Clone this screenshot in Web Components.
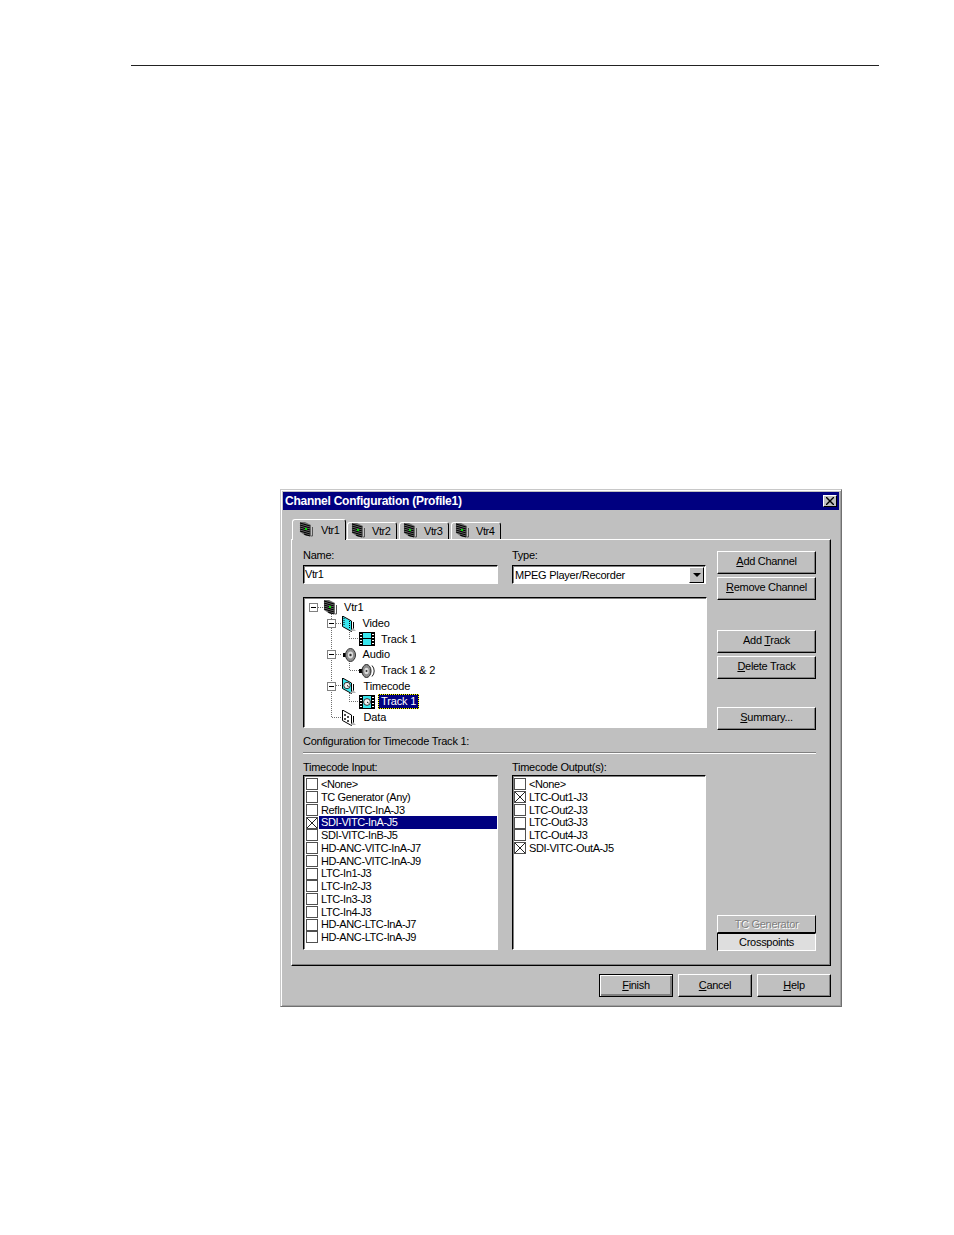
<!DOCTYPE html>
<html>
<head>
<meta charset="utf-8">
<title>Channel Configuration</title>
<style>
  html, body { margin: 0; background: #fff; }
  body { font-family: "Liberation Sans", Arial, sans-serif; }
</style>
</head>
<body>
<manual-page>
  <config-dialog heading="Channel Configuration (Profile1)">
    <tab-strip slot="tabs">
      <tab-item active>Vtr1</tab-item>
      <tab-item>Vtr2</tab-item>
      <tab-item>Vtr3</tab-item>
      <tab-item>Vtr4</tab-item>
    </tab-strip>

    <channel-panel slot="panel">
      <labeled-field slot="name" label="Name:" lift><text-box>Vtr1</text-box></labeled-field>
      <labeled-field slot="type" label="Type:" lift><combo-box>MPEG Player/Recorder</combo-box></labeled-field>

      <track-tree slot="tree">
        <tree-row depth="0" expander icon="vtr">Vtr1</tree-row>
        <tree-row depth="1" expander icon="video" gap="6">Video</tree-row>
        <tree-row depth="2" icon="film" gap="6">Track 1</tree-row>
        <tree-row depth="1" expander icon="speaker" gap="6">Audio</tree-row>
        <tree-row depth="2" icon="speaker2" gap="6">Track 1 &amp; 2</tree-row>
        <tree-row depth="1" expander icon="clock" gap="7">Timecode</tree-row>
        <tree-row depth="2" icon="filmclock" gap="6" selected>Track 1</tree-row>
        <tree-row depth="1" icon="data" gap="7">Data</tree-row>
      </track-tree>

      <win-button slot="actions"><u>A</u>dd Channel</win-button>
      <win-button slot="actions" style="margin-top:3.5px"><u>R</u>emove Channel</win-button>
      <win-button slot="actions" style="margin-top:30.5px">Add <u>T</u>rack</win-button>
      <win-button slot="actions" style="margin-top:3.5px"><u>D</u>elete Track</win-button>
      <win-button slot="actions" style="margin-top:28.5px"><u>S</u>ummary...</win-button>

      <span slot="caption">Configuration for Timecode Track 1:</span>

      <labeled-field slot="input" label="Timecode Input:">
        <check-list>
          <check-item>&lt;None&gt;</check-item>
          <check-item>TC Generator (Any)</check-item>
          <check-item>RefIn-VITC-InA-J3</check-item>
          <check-item checked selected>SDI-VITC-InA-J5</check-item>
          <check-item>SDI-VITC-InB-J5</check-item>
          <check-item>HD-ANC-VITC-InA-J7</check-item>
          <check-item>HD-ANC-VITC-InA-J9</check-item>
          <check-item>LTC-In1-J3</check-item>
          <check-item>LTC-In2-J3</check-item>
          <check-item>LTC-In3-J3</check-item>
          <check-item>LTC-In4-J3</check-item>
          <check-item>HD-ANC-LTC-InA-J7</check-item>
          <check-item>HD-ANC-LTC-InA-J9</check-item>
        </check-list>
      </labeled-field>

      <labeled-field slot="output" label="Timecode Output(s):">
        <check-list style="--inset:1px">
          <check-item>&lt;None&gt;</check-item>
          <check-item checked>LTC-Out1-J3</check-item>
          <check-item>LTC-Out2-J3</check-item>
          <check-item>LTC-Out3-J3</check-item>
          <check-item>LTC-Out4-J3</check-item>
          <check-item checked>SDI-VITC-OutA-J5</check-item>
        </check-list>
      </labeled-field>

      <win-button slot="mode" flat disabled>TC Generator</win-button>
      <win-button slot="mode" flat pressed>Crosspoints</win-button>
    </channel-panel>

    <win-button slot="footer" wide default><u>F</u>inish</win-button>
    <win-button slot="footer" wide><u>C</u>ancel</win-button>
    <win-button slot="footer" wide><u>H</u>elp</win-button>
  </config-dialog>
</manual-page>

<script>
// small helper, every element just sets its shadow html once
class Base extends HTMLElement {
  constructor() {
    super();
    this.shadowDOM = this.attachShadow({ mode: "open" });
  }
  connectedCallback() {
    this.render();
  }
}

const CYAN = "#38e6ee";
const SLANT_EDGE = `<path d="M12.5 6v8" stroke="#000"/><polygon points="9,15 15,15 12,12" fill="#b4b4b4"/>`;

const ICONS = {
  vtr: `<polygon points="1,0 6,0 12,3 12,14 7,14 1,10" fill="#6e6e6e"/>
    <path d="M1 1L11 4M1 3L11 6M1 5L11 8M1 7L11 10M1 9L11 12M5 12L11 14" stroke="#000" stroke-width="1.2"/>
    <rect x="6" y="6" width="2" height="2" fill="#00e000"/>
    <path d="M13.5 5v9h-2" fill="none" stroke="#555"/>`,
  video: `<polygon points="1,0 10,5 10,15 1,10" fill="${CYAN}"/>
    <path d="M1.5 0v10.5l9 5V5z" fill="none" stroke="#000"/>
    <path d="M3 2v8M8.5 5v8" stroke="#000" stroke-dasharray="1 1"/>${SLANT_EDGE}`,
  film: `<rect x="0" y="1" width="16" height="14" fill="#000"/>
    <rect x="4" y="2" width="8" height="5" fill="${CYAN}"/><rect x="4" y="8" width="8" height="6" fill="${CYAN}"/>
    <path d="M1 3.5h2M1 6.5h2M1 9.5h2M1 12.5h2M13 3.5h2M13 6.5h2M13 9.5h2M13 12.5h2" stroke="#fff"/>`,
  speaker: `<path d="M2 6h3l4-4v12l-4-4H2z" fill="#000"/>
    <ellipse cx="9.5" cy="8" rx="5" ry="6.5" fill="#8e8e8e" stroke="#333"/>
    <ellipse cx="9.5" cy="8" rx="2.6" ry="3.4" fill="#dcdcdc"/><circle cx="9.5" cy="8" r="1.2" fill="#333"/>`,
  speaker2: `<path d="M0 6h3l4-4v12l-4-4H0z" fill="#000"/>
    <ellipse cx="7.5" cy="8" rx="4.5" ry="6.5" fill="#8e8e8e" stroke="#222"/>
    <ellipse cx="7.5" cy="8" rx="2.2" ry="3.2" fill="#dcdcdc"/><circle cx="7.5" cy="8" r="1" fill="#333"/>
    <path d="M13 2.5a8 8 0 0 1 0 11" fill="none" stroke="#222"/>`,
  clock: `<polygon points="1,0 10,5 10,15 1,10" fill="${CYAN}"/>
    <path d="M1.5 0v10.5l9 5V5z" fill="none" stroke="#000"/>
    <circle cx="6" cy="7.5" r="3.2" fill="#eee" stroke="#333"/><path d="M6 7.5l1.5 1" stroke="#000"/>${SLANT_EDGE}`,
  filmclock: `<rect x="0" y="1" width="16" height="14" fill="#000"/>
    <rect x="4" y="2" width="8" height="12" fill="${CYAN}"/>
    <path d="M1 3.5h2M1 6.5h2M1 9.5h2M1 12.5h2M13 3.5h2M13 6.5h2M13 9.5h2M13 12.5h2" stroke="#fff"/>
    <circle cx="8" cy="8" r="3.4" fill="#eee" stroke="#333"/><path d="M8 8l1.5 1" stroke="#000"/>`,
  data: `<polygon points="1,0 10,5 10,15 1,10" fill="#fff"/>
    <path d="M1.5 0v10.5l9 5V5z" fill="none" stroke="#000"/>
    <path d="M4 4v2M7 6v2M4 8v2M7 10v2" stroke="#000" stroke-width="1.4"/>${SLANT_EDGE}`
};

function iconSvg(name) {
  return `<svg width="16" height="16" viewBox="0 0 16 16" style="display:block">${ICONS[name]}</svg>`;
}

class ManualPage extends Base {
  render() {
    this.shadowDOM.innerHTML = `<style>
    :host { display: block; height: 1235px; background: #fff; overflow: hidden; }
    .rule { height: 1px; background: #222; margin: 65px 75px 0 131px; }
    .body { margin: 423px 0 0 280px; }
    </style>
    <div class="rule"></div>
    <div class="body"><slot></slot></div>`;
  }
}

class ConfigDialog extends Base {
  render() {
    this.shadowDOM.innerHTML = `<style>
    :host {
      display: block;
      width: 562px;
      height: 518px;
      box-sizing: border-box;
      background: #c0c0c0;
      border: 1px solid;
      border-color: #c8c8c8 #707070 #707070 #c8c8c8;
      box-shadow: inset 1px 1px 0 #fff, inset -1px -1px 0 #a0a0a0;
      padding: 2px;
      font: 11px "Liberation Sans", Arial, sans-serif;
      letter-spacing: -0.4px;
      color: #000;
    }
    .title {
      height: 18px;
      background: #000080;
      color: #fff;
      font-weight: 700;
      font-size: 12px;
      letter-spacing: -0.25px;
      display: flex;
      align-items: center;
      justify-content: space-between;
      padding: 0 2px 0 2px;
    }
    .close {
      width: 14px;
      height: 12px;
      box-sizing: border-box;
      background: #c0c0c0;
      border: 1px solid;
      border-color: #fff #000 #000 #fff;
    }
    .close svg { display: block; margin: 1px 0 0 2px; }
    .tabs { margin: 10px 0 0 8px; }
    .panel { margin: 0 8px; }
    .footer {
      display: flex;
      justify-content: flex-end;
      gap: 5px;
      margin: 8px 8px 0 0;
    }
    </style>
    <div class="title">
      <span>${this.getAttribute("heading")}</span>
      <div class="close"><svg width="8" height="8" viewBox="0 0 8 8"><path d="M0 0L8 8M8 0L0 8" stroke="#000" stroke-width="1.4"/></svg></div>
    </div>
    <div class="tabs"><slot name="tabs"></slot></div>
    <div class="panel"><slot name="panel"></slot></div>
    <div class="footer"><slot name="footer"></slot></div>`;
  }
}

class TabStrip extends Base {
  render() {
    this.shadowDOM.innerHTML = `<style>
    :host { display: flex; align-items: flex-end; height: 19px; position: relative; z-index: 1; }
    </style><slot></slot>`;
  }
}

class TabItem extends Base {
  render() {
    const active = this.hasAttribute("active");
    this.shadowDOM.innerHTML = `<style>
    :host {
      display: flex;
      align-items: center;
      box-sizing: border-box;
      width: ${active ? 54 : 50}px;
      height: ${active ? 21 : 17}px;
      margin: ${active ? "0 1px -1px 1px" : "0 2px 0 0"};
      padding: 0 0 0 ${active ? 6 : 3}px;
      background: #c0c0c0;
      border: 1px solid;
      border-color: #fff #000 transparent #fff;
      border-bottom: 0;
      border-radius: 3px 3px 0 0;
    }
    .label { margin-left: ${active ? 6 : 5}px; }
    </style>
    ${iconSvg("vtr")}<span class="label"><slot></slot></span>`;
  }
}

class ChannelPanel extends Base {
  render() {
    this.shadowDOM.innerHTML = `<style>
    :host {
      display: block;
      box-sizing: border-box;
      height: 427px;
      background: #c0c0c0;
      border: 1px solid;
      border-color: #fff #000 #000 #fff;
      box-shadow: inset -1px -1px 0 #808080;
      padding: 11px 14px 0 11px;
    }
    .top {
      display: grid;
      grid-template-columns: 404px 99px;
      column-gap: 10px;
    }
    .left { display: flex; flex-direction: column; }
    .fields { display: flex; gap: 14px; height: 33px; }
    .fields ::slotted([slot="name"]) { width: 195px; }
    .fields ::slotted([slot="type"]) { width: 194px; }
    .tree { margin-top: 13px; }
    .actions { display: flex; flex-direction: column; }
    .caption { margin-top: 5.5px; line-height: 13px; height: 13px; letter-spacing: -0.23px; white-space: nowrap; }
    .sep { margin-top: 4px; height: 1px; background: #808080; border-bottom: 1px solid #fff; }
    .bottom {
      display: grid;
      grid-template-columns: 404px 99px;
      column-gap: 10px;
      margin-top: 7px;
    }
    .lists { display: flex; gap: 14px; }
    .lists ::slotted([slot="input"]) { width: 195px; }
    .lists ::slotted([slot="output"]) { width: 194px; }
    .mode { display: flex; flex-direction: column; justify-content: flex-end; margin-bottom: -1px; }
    </style>
    <div class="top">
      <div class="left">
        <div class="fields"><slot name="name"></slot><slot name="type"></slot></div>
        <div class="tree"><slot name="tree"></slot></div>
      </div>
      <div class="actions"><slot name="actions"></slot></div>
    </div>
    <div class="caption"><slot name="caption"></slot></div>
    <div class="sep"></div>
    <div class="bottom">
      <div class="lists"><slot name="input"></slot><slot name="output"></slot></div>
      <div class="mode"><slot name="mode"></slot></div>
    </div>`;
  }
}

class LabeledField extends Base {
  render() {
    const lift = this.hasAttribute("lift");
    this.shadowDOM.innerHTML = `<style>
    :host { display: block; }
    .label {
      height: ${lift ? 16 : 14}px;
      margin-top: ${lift ? -2 : 0}px;
      line-height: 12px;
      letter-spacing: -0.28px;
      white-space: nowrap;
    }
    </style>
    <div class="label">${this.getAttribute("label")}</div>
    <slot></slot>`;
  }
}

class TextBox extends Base {
  render() {
    this.shadowDOM.innerHTML = `<style>
    :host {
      display: block;
      box-sizing: border-box;
      height: 19px;
      background: #fff;
      border: 1px solid;
      border-color: #000 #fff #fff #000;
      box-shadow: inset 1px 1px 0 #808080;
      padding-left: 1px;
      line-height: 16px;
    }
    </style><slot></slot>`;
  }
}

class ComboBox extends Base {
  render() {
    this.shadowDOM.innerHTML = `<style>
    :host {
      display: flex;
      justify-content: space-between;
      box-sizing: border-box;
      height: 19px;
      background: #fff;
      border: 1px solid;
      border-color: #000 #fff #fff #000;
      box-shadow: inset 1px 1px 0 #808080;
      padding: 1px 1px 1px 2px;
      line-height: 16px;
      letter-spacing: -0.25px;
    }
    .arrow {
      width: 15px;
      height: 16px;
      box-sizing: border-box;
      background: #c0c0c0;
      border: 1px solid;
      border-color: #fff #000 #000 #fff;
      display: flex;
      align-items: center;
      justify-content: center;
    }
    .arrow i {
      border-top: 4px solid #000;
      border-left: 4px solid transparent;
      border-right: 4px solid transparent;
    }
    </style>
    <span><slot></slot></span>
    <div class="arrow"><i></i></div>`;
  }
}

class WinButton extends Base {
  render() {
    const wide = this.hasAttribute("wide");
    const flat = this.hasAttribute("flat");
    const pressed = this.hasAttribute("pressed");
    const disabled = this.hasAttribute("disabled");
    const def = this.hasAttribute("default");
    this.shadowDOM.innerHTML = `<style>
    :host {
      display: flex;
      align-items: center;
      justify-content: center;
      box-sizing: border-box;
      width: ${wide ? 74 : 99}px;
      height: ${flat ? 18 : wide ? 23 : 22.5}px;
      padding-bottom: ${flat ? 0 : 2}px;
      background: ${pressed ? "#dedede" : "#c0c0c0"};
      border: 1px solid;
      border-color: ${pressed ? "#000 #fff #fff #000" : "#fff #000 #000 #fff"};
      ${pressed || flat ? "" : "box-shadow: inset -1px -1px 0 #808080;"}
      ${def ? "outline: 1px solid #000; outline-offset: -1px; box-shadow: inset 1px 1px 0 #fff, inset -2px -2px 0 #808080;" : ""}
      ${disabled ? "color: #808080; text-shadow: 1px 1px 0 #fff;" : ""}
      letter-spacing: -0.3px;
      white-space: nowrap;
    }
    </style><span><slot></slot></span>`;
  }
}

class TrackTree extends Base {
  render() {
    // connector lines sit over the tree rows, measured from the padding box
    const dots = [
      "M13 8.5H18",
      "M26.5 13V118.5H36",
      "M31 24.5H36", "M31 55.5H36", "M31 86.5H36",
      "M44.5 29V39.5H54", "M44.5 60V71.5H54", "M44.5 92V102.5H54"
    ];
    this.shadowDOM.innerHTML = `<style>
    :host {
      display: block;
      position: relative;
      box-sizing: border-box;
      height: 131px;
      background: #fff;
      border: 1px solid;
      border-color: #000 #fff #fff #000;
      box-shadow: inset 1px 1px 0 #808080;
      padding: 2px 0 0 1px;
    }
    svg { position: absolute; left: 1px; top: 1px; pointer-events: none; }
    </style>
    <svg width="100" height="125" shape-rendering="crispEdges">
      ${dots.map((d) => `<path d="${d}" fill="none" stroke="#707070" stroke-dasharray="1 1"/>`).join("")}
    </svg>
    <slot></slot>`;
  }
}

class TreeRow extends Base {
  render() {
    const depth = +this.getAttribute("depth");
    const gap = this.getAttribute("gap") || 5;
    const selected = this.hasAttribute("selected");
    const box = this.hasAttribute("expander")
      ? `<svg width="9" height="9" viewBox="0 0 9 9" style="display:block"><rect x=".5" y=".5" width="8" height="8" fill="#fff" stroke="#808080"/><path d="M2 4.5H7" stroke="#000"/></svg>`
      : "";
    this.shadowDOM.innerHTML = `<style>
    :host {
      display: flex;
      align-items: center;
      height: 15.7px;
      padding-left: ${depth ? 3 + depth * 18.5 : 4}px;
      white-space: nowrap;
      position: relative;
      letter-spacing: -0.15px;
    }
    .exp { width: 14px; flex: none; }
    .ico { width: 16px; flex: none; }
    .txt { margin-left: ${gap - (selected ? 2 : 0)}px; padding: 0 ${selected ? 2 : 0}px; line-height: 13px; height: 13px; }
    .sel { background: #000080; color: #fff; outline: 1px dotted #ff0; outline-offset: 0; box-shadow: 0 0 0 1px #000; }
    </style>
    <div class="exp">${box}</div>
    <div class="ico">${iconSvg(this.getAttribute("icon"))}</div>
    <span class="txt ${selected ? "sel" : ""}"><slot></slot></span>`;
  }
}

class CheckList extends Base {
  render() {
    this.shadowDOM.innerHTML = `<style>
    :host {
      display: block;
      box-sizing: border-box;
      height: 175px;
      background: #fff;
      border: 1px solid;
      border-color: #000 #fff #fff #000;
      box-shadow: inset 1px 1px 0 #808080;
      padding: 2px 0 0 var(--inset, 2px);
    }
    </style><slot></slot>`;
  }
}

class CheckItem extends Base {
  render() {
    const checked = this.hasAttribute("checked");
    const selected = this.hasAttribute("selected");
    this.shadowDOM.innerHTML = `<style>
    :host { display: flex; align-items: center; height: 12.75px; white-space: nowrap; }
    svg { flex: none; display: block; }
    .txt {
      flex: 1;
      margin-left: 1px;
      padding-left: 2px;
      line-height: 12.75px;
      ${selected ? "background: #000080; color: #fff;" : ""}
    }
    </style>
    <svg width="12" height="12" viewBox="0 0 12 12">
      <rect x=".5" y=".5" width="11" height="11" fill="#fff" stroke="#505050"/>
      ${checked ? '<path d="M1 1L11 11M11 1L1 11" stroke="#222"/>' : ""}
    </svg>
    <span class="txt"><slot></slot></span>`;
  }
}

customElements.define("manual-page", ManualPage);
customElements.define("config-dialog", ConfigDialog);
customElements.define("tab-strip", TabStrip);
customElements.define("tab-item", TabItem);
customElements.define("channel-panel", ChannelPanel);
customElements.define("labeled-field", LabeledField);
customElements.define("text-box", TextBox);
customElements.define("combo-box", ComboBox);
customElements.define("win-button", WinButton);
customElements.define("track-tree", TrackTree);
customElements.define("tree-row", TreeRow);
customElements.define("check-list", CheckList);
customElements.define("check-item", CheckItem);
</script>
</body>
</html>
